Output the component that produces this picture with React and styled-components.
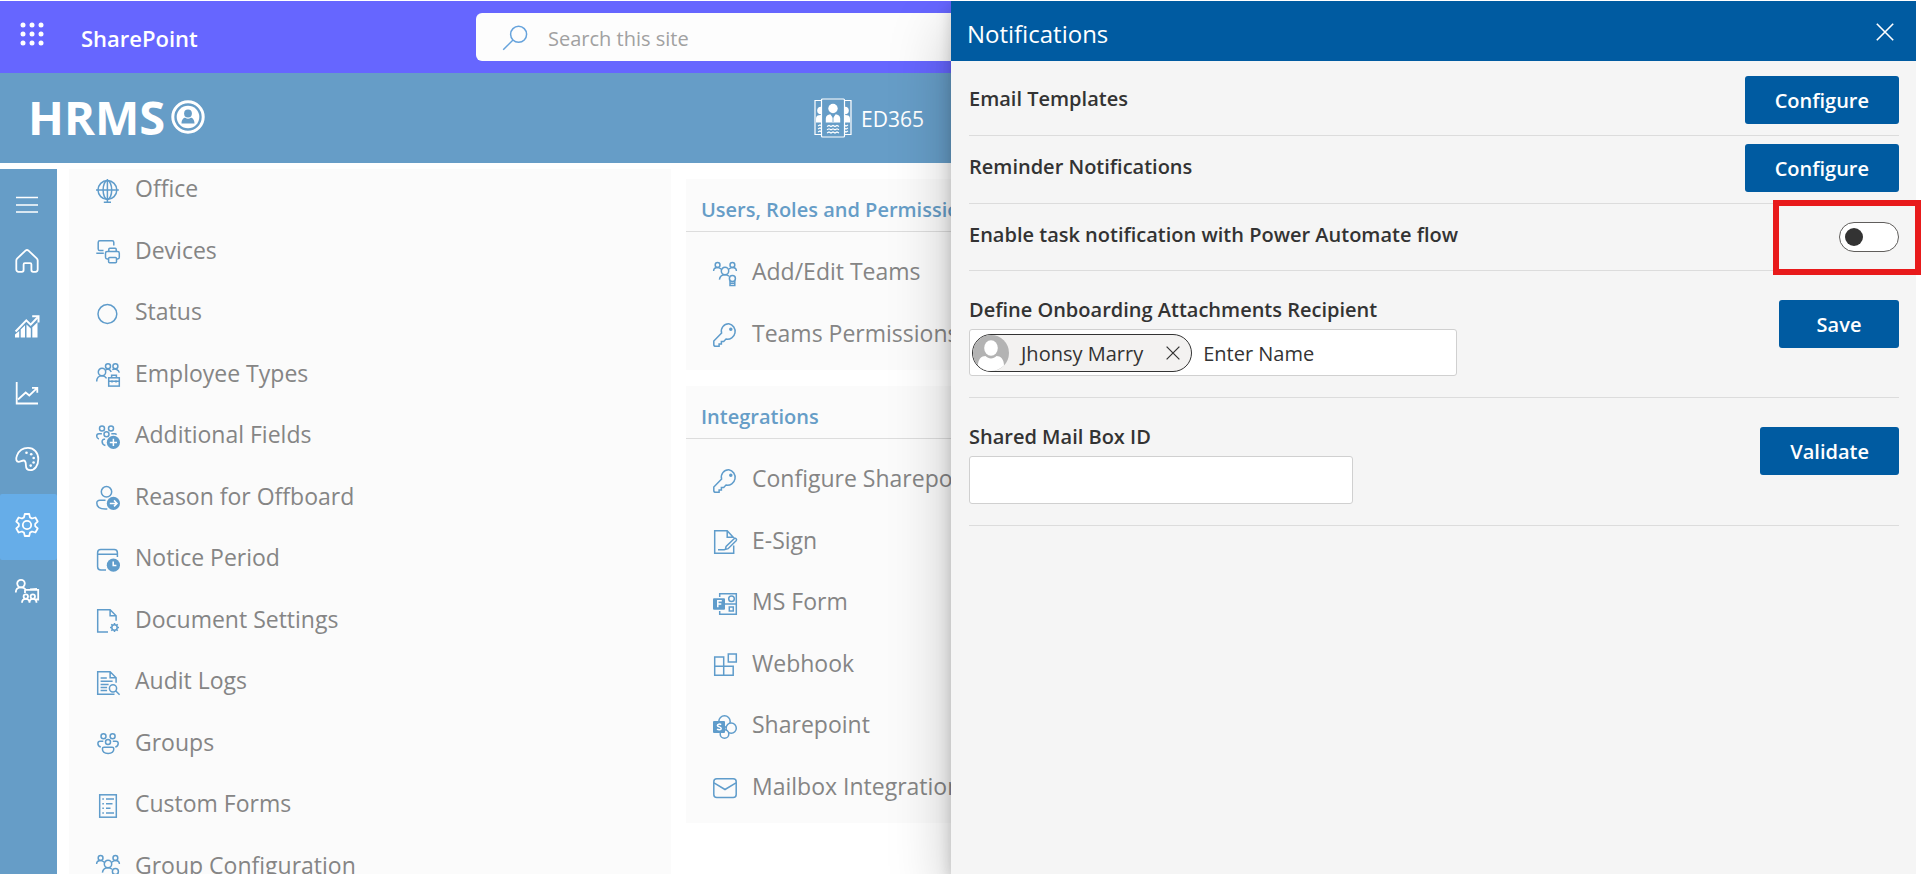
import React from "react";
import styled, { createGlobalStyle } from "styled-components";

const GlobalStyle = createGlobalStyle`
  * { box-sizing: border-box; }
  body {
    margin: 0;
    background: #ffffff;
    color: #333333;
    font-family: "Open Sans", "Noto Sans", sans-serif;
    overflow: hidden;
  }
  button, input { font-family: inherit; }
  ul { list-style: none; margin: 0; padding: 0; }
`;

const Shell = styled.div`
  position: relative;
  display: flex;
  flex-direction: column;
  height: 100vh;
  margin-right: 6px;
  padding-top: 1px;
`;

/* Suite bar */

const SuiteBar = styled.div`
  display: grid;
  grid-template-columns: minmax(220px, 1fr) minmax(0, 964px) minmax(0, 1fr);
  align-items: center;
  flex: none;
  height: 72px;
  background: #6666ff;
`;

const SuiteStart = styled.div`
  display: flex;
  align-items: center;
  gap: 37px;
  padding-left: 20px;
`;

const PlainButton = styled.button`
  display: flex;
  align-items: center;
  justify-content: center;
  padding: 0;
  border: 0;
  background: none;
  color: inherit;
  cursor: pointer;
`;

const WaffleButton = styled(PlainButton)`
  height: 32px;
  padding-bottom: 6px;
  color: #ffffff;
`;

const SuiteName = styled.a`
  padding-top: 2px;
  color: #ffffff;
  font-size: 22px;
  font-weight: 600;
  line-height: 32px;
  text-decoration: none;
`;

const SearchBox = styled.label`
  display: flex;
  align-items: center;
  gap: 20px;
  height: 48px;
  padding: 2px 26px 0;
  border-radius: 6px;
  background: #fdfdfd;
  color: #66a3dc;
`;

const SearchInput = styled.input`
  flex: 1;
  min-width: 0;
  padding: 2px 0 0;
  border: 0;
  outline: 0;
  background: none;
  font-size: 20px;
  line-height: 28px;
  &::placeholder { color: #a1a1a1; opacity: 1; }
`;

/* Product header */

const ProductHeader = styled.header`
  display: grid;
  grid-template-columns: calc(50% - 144px) 1fr;
  align-items: center;
  flex: none;
  height: 90px;
  background: #669dc7;
  color: #ffffff;
`;

const Brand = styled.div`
  display: flex;
  align-items: center;
  gap: 6px;
  padding: 0 0 2px 28px;
  font-size: 47px;
  font-weight: 700;
  line-height: 56px;
`;

const ProductLink = styled.a`
  display: flex;
  align-items: center;
  gap: 9px;
  color: #ffffff;
  font-size: 21px;
  line-height: 40px;
  text-decoration: none;
`;

const ProductName = styled.span`
  padding-top: 2px;
`;

/* Body */

const Body = styled.div`
  display: flex;
  flex: 1;
  min-height: 0;
  gap: 12px;
  padding-top: 6px;
`;

const SideNav = styled.nav`
  flex: none;
  width: 57px;
  padding-top: 15px;
  background: #669dc7;
`;

const NavButton = styled(PlainButton)`
  width: 100%;
  height: ${(p) => (p.$short ? 46 : 66)}px;
  padding: 0 3px 5px 0;
  border-radius: 2px;
  background: ${(p) => (p.$active ? "#66ade8" : "none")};
  color: #ffffff;
`;

const Columns = styled.main`
  display: grid;
  grid-template-columns: repeat(3, minmax(0, 1fr));
  gap: 15px;
  flex: 1;
  min-width: 0;
  padding-right: 11px;
`;

const ScrollColumn = styled.section`
  overflow: hidden;
  background: #fbfbfb;
`;

const ScrolledList = styled.ul`
  margin-top: -11px;
`;

const CardColumn = styled.div`
  display: flex;
  flex-direction: column;
  gap: 16px;
  padding-top: 10px;
`;

const Card = styled.section`
  background: #fbfbfb;
  padding-bottom: 6px;
`;

const CardTitle = styled.h2`
  margin: 0 0 9px;
  padding: 13px 15px 3px;
  border-bottom: 1px solid #dddddd;
  color: #669dc7;
  font-size: 20px;
  font-weight: 600;
  line-height: 36px;
  white-space: nowrap;
`;

const MenuLink = styled.a`
  display: flex;
  align-items: center;
  gap: 15px;
  padding: 13px 0 14px 27px;
  color: #858585;
  font-size: 23px;
  line-height: 1.5;
  text-decoration: none;
  white-space: nowrap;
`;

const Svg = styled.svg`
  display: block;
  flex: none;
  width: ${(p) => p.$w || 24}px;
  height: ${(p) => p.$h || p.$w || 24}px;
`;

const MenuGlyph = styled(Svg)`
  margin-top: 5px;
  color: #5f9ccb;
`;

/* Drawer */

const Drawer = styled.aside`
  position: absolute;
  z-index: 2;
  top: 1px;
  right: 0;
  bottom: 0;
  left: calc(50% - 7px);
  background: #f5f5f5;
  &::before {
    content: "";
    position: absolute;
    z-index: -1;
    inset: 0;
    box-shadow: 0 26px 58px rgba(0, 0, 0, 0.22), 0 5px 14px rgba(0, 0, 0, 0.18);
    clip-path: inset(0 100% 0 -160px);
  }
`;

const DrawerHeader = styled.header`
  display: flex;
  align-items: center;
  justify-content: space-between;
  height: 60px;
  padding: 2px 22px 0 16px;
  background: #005ba1;
  color: #ffffff;
`;

const DrawerTitle = styled.h1`
  margin: 0;
  padding-top: 4px;
  font-size: 24px;
  font-weight: 400;
  line-height: 32px;
`;

const DrawerBody = styled.div`
  padding: 7px 17px 0 18px;
`;

const SettingRow = styled.div`
  position: relative;
  display: flex;
  align-items: center;
  justify-content: space-between;
  min-height: 67px;
  padding: 8px 0 11px;
  border-bottom: 1px solid #dcdcdc;
`;

const FieldRow = styled(SettingRow)`
  align-items: flex-start;
  padding: 29px 0 21px;
`;

const SettingName = styled.label`
  display: block;
  padding-bottom: 2px;
  font-size: 20px;
  font-weight: 600;
  line-height: 20px;
`;

const Field = styled.div`
  display: flex;
  flex-direction: column;
  gap: 7px;
  width: ${(p) => p.$width}px;
`;

const Primary = styled.button`
  height: 48px;
  min-width: 120px;
  padding: 2px 30px 0;
  border: 0;
  border-radius: 3px;
  background: #005ba1;
  color: #ffffff;
  font-size: 20px;
  font-weight: 600;
  line-height: 28px;
  cursor: pointer;
`;

const Toggle = styled.input`
  appearance: none;
  display: flex;
  align-items: center;
  width: 60px;
  height: 30px;
  margin: 2px 0 0;
  padding: 0 5px;
  border: 1px solid #605e5c;
  border-radius: 15px;
  background: #ffffff;
  cursor: pointer;
  &::before {
    content: "";
    width: 18px;
    height: 18px;
    border-radius: 50%;
    background: #333333;
  }
  &:checked { justify-content: flex-end; }
`;

const Highlight = styled.div`
  position: absolute;
  top: -4px;
  right: -22px;
  width: 148px;
  height: 75px;
  border: 6px solid #e81a1b;
  pointer-events: none;
`;

const Picker = styled.div`
  display: flex;
  align-items: center;
  gap: 11px;
  height: 47px;
  padding: 0 2px;
  border: 1px solid #d0d0d0;
  border-radius: 3px;
  background: #ffffff;
`;

const Chip = styled.span`
  display: flex;
  align-items: center;
  height: 38px;
  padding-right: 11px;
  border: 1px solid #333333;
  border-radius: 19px;
  background: #f3f2f1;
  font-size: 20px;
  line-height: 28px;
  white-space: nowrap;
`;

const ChipName = styled.span`
  margin: 0 23px 0 12px;
  padding-top: 2px;
`;

const PickerInput = styled.input`
  flex: 1;
  min-width: 0;
  padding: 2px 0 0;
  border: 0;
  outline: 0;
  background: none;
  font-size: 20px;
  line-height: 28px;
  &::placeholder { color: #333333; opacity: 1; }
`;

const TextInput = styled.input`
  width: 100%;
  height: 48px;
  padding: 0 10px;
  border: 1px solid #d0d0d0;
  border-radius: 3px;
  background: #ffffff;
  font-size: 20px;
`;

/* Drawings shared by the navigation and the menus, on a 24 unit grid */

const teamHeads = (
  <>
    <circle cx="4.6" cy="3" r="2.4" />
    <circle cx="19.4" cy="3" r="2.4" />
    <circle cx="12" cy="9" r="3.7" />
    <path d="M.6 9c0-2 1.6-3.6 4-3.6 1.8 0 2.6 1 3.6 1.8M23.4 9c0-2-1.6-3.6-4-3.6-1.8 0-2.6 1-3.6 1.8M6.4 17.6c.4-3 2.4-4.9 5.6-4.9 1.8 0 3 .6 4 1.6" />
    <circle cx="19.4" cy="16.4" r="3" />
    <path d="M17 18.5v5h4.800v-5M17 21.300h4.800" />
  </>
);

const keyShape = (
  <>
    <path d="M15.8.8a7.3 7.3 0 0 0-7.2 9.3L.8 18v3.4c0 1 .8 1.9 1.900 1.9h3.400v-2.400h2.300v-2.500h2.300l2.300-2.400a7.300 7.300 0 1 0 2.800-15.200z" />
    <circle cx="17.8" cy="6.2" r="1" fill="currentColor" />
  </>
);

const glyphs = {
  globe: (
    <>
      <circle cx="11.4" cy="11" r="9.4" />
      <ellipse cx="11.4" cy="11" rx="4.3" ry="9.4" />
      <path d="M0 11h22.8M11.4 0v23M7.8 23.2h7.2" />
    </>
  ),
  devices: (
    <>
      <path d="M7.5 10.6H3.8A1.6 1.6 0 0 1 2.2 9V2.4C2.2 1.5 2.9.8 3.8.8h12.4c.9 0 1.600.7 1.600 1.600V5.500M.3 13.300h7.500" />
      <path d="M12.800 11.500V9.200c0-.6.4-1 1-1h5.400c.6 0 1 .4 1 1v2.300M12.500 19h-1.300c-1 0-1.700-.7-1.700-1.700v-4c0-1 .7-1.700 1.700-1.700h10.400c1 0 1.700.7 1.700 1.700v4c0 1-.7 1.700-1.700 1.700h-1.100" />
      <rect x="12.600" y="17.400" width="7.900" height="5.400" rx="1" />
    </>
  ),
  circle: <circle cx="11.400" cy="12" r="9.400" />,
  employees: (
    <>
      <circle cx="12" cy="3.300" r="2.500" />
      <circle cx="19.400" cy="3.300" r="2.500" />
      <circle cx="6" cy="9" r="3.700" />
      <path d="M.7 18.500c0-3.300 2-5.800 5.300-5.800 2.400 0 3.600 1.100 4.600 2.600M9.600 6.800c1.500-1 4.300-1 5.600 2.200M16.300 6.700c3-1.500 6.300-.2 7 3" />
      <rect x="12.700" y="14.800" width="10.600" height="8.300" />
      <path d="M15.600 14.600v-2.300h4.800v2.300M12.700 18.300h10.600M16 17.300v2.300M20 17.300v2.300" />
    </>
  ),
  addPeople: (
    <>
      <circle cx="6" cy="3.500" r="2.500" />
      <circle cx="15" cy="3.500" r="2.500" />
      <circle cx="10.500" cy="9.200" r="2.500" />
      <path d="M2.900 14C1.500 13.500.7 12.300.7 11c0-1.300.9-2.300 2.200-2.300h3M15.300 8.700h3.300c1 0 1.600.4 2 1M9.400 20.500c-2-.6-3.300-1.800-3.300-4 0-1.300.8-2.200 2-2.200h1" />
      <circle cx="17.400" cy="17.400" r="6.600" fill="currentColor" stroke="none" />
      <path d="M17.400 13.800v7.200M13.800 17.400h7.200" stroke="#fff" />
    </>
  ),
  offboard: (
    <>
      <circle cx="10.500" cy="5.800" r="5.200" />
      <path d="M9.500 14.300H3.800c-1.700 0-3 1-3 2.700 0 3.700 3.400 6 8.500 6.100h2" />
      <circle cx="17.400" cy="17.400" r="6.600" fill="currentColor" stroke="none" />
      <path d="M13.800 17.400h7M18 14.400l3 3-3 3" stroke="#fff" />
    </>
  ),
  notice: (
    <>
      <path d="M10 22H4.800A3.200 3.200 0 0 1 1.600 18.800V4.700c0-1.800 1.400-3.200 3.200-3.200h13.400c1.800 0 3.200 1.400 3.200 3.200V9M1.600 6.200h19.800" />
      <circle cx="17.400" cy="17.200" r="6.600" fill="currentColor" stroke="none" />
      <path d="M17.200 13.600v4h3.200" stroke="#fff" />
    </>
  ),
  docGear: (
    <>
      <path d="M12 23H1.700V.8h12.400l6 6v5M14.100.8v6h6" />
      <circle cx="18.500" cy="18.500" r="2.700" />
      <path d="M18.500 14v1.500M18.500 21.500V23M14 18.500h1.500M21.500 18.500H23M15.300 15.300l1 1M20.700 20.700l1 1M15.300 21.700l1-1M20.700 16.300l1-1" />
    </>
  ),
  audit: (
    <>
      <path d="M18.500 23.200H1.700V.8h12.400l6 6v5M14.100.8v6h6M4.600 7h6.200M4.600 10.200h12M4.600 13.400h8M4.600 16.400h6.500M4.600 19.500h6.500" />
      <circle cx="17" cy="17.300" r="3.600" />
      <path d="M19.600 19.800l4 4" />
    </>
  ),
  groups: (
    <>
      <circle cx="7.500" cy="4.300" r="2.500" />
      <circle cx="16.600" cy="4.300" r="2.500" />
      <circle cx="12" cy="10" r="2.500" />
      <path d="M4.800 15C3 14.600 1.900 13.300 1.900 11.500c0-1.300.9-2.200 2.200-2.200h3.200M19.300 15c1.800-.4 2.900-1.700 2.900-3.500 0-1.300-.9-2.200-2.200-2.200h-3.200M8 15.200h8.200c1 0 1.600.7 1.600 1.600 0 2.900-2.300 4.700-5.700 4.700s-5.700-1.800-5.700-4.700c0-.9.6-1.600 1.600-1.600z" />
    </>
  ),
  form: (
    <>
      <rect x="3.700" y=".8" width="16.600" height="22.400" />
      <path d="M6.300 5h1.600M10 5h8M6.300 9.700h1.600M10 9.700h6.500M6.300 14.300h1.600M10 14.300h4.500M6.300 19h1.600M10 19h8" />
    </>
  ),
  team: teamHeads,
  key: keyShape,
  sign: (
    <>
      <path d="M20.700 15.500V23.200H1.700V.8h12.500l6 6.400h-6V.8" />
      <path d="M12.300 19.500l.8-3 8-7.800c1.500-1.200 3.300.7 2 2.100l-8 7.900zM5 19.700h7.300" />
    </>
  ),
  msForm: (
    <>
      <path d="M6.700 5V1.700h16.600v20.600H6.700V19M12 12h11.300" />
      <circle cx="18.500" cy="6.800" r="2.800" />
      <rect x="16.300" y="15" width="4" height="4" />
      <rect x="0" y="6.300" width="12" height="11.500" rx="1" fill="currentColor" stroke="none" />
      <path d="M4.800 15.300V8.800h4M4.800 12.100h3.500" stroke="#fff" strokeWidth="1.500" />
    </>
  ),
  webhook: (
    <path d="M1.700 4h9v18.200h-9zM1.700 13.200h18.500v9H1.700zM15.300 1h8v8h-8z" />
  ),
  sharepoint: (
    <>
      <circle cx="11.500" cy="6.500" r="5.700" />
      <circle cx="18.200" cy="13.200" r="5.100" fill="#fbfbfb" />
      <circle cx="11.500" cy="19" r="4.300" fill="#fbfbfb" />
      <rect x="0" y="6" width="12" height="12" rx="1" fill="currentColor" stroke="none" />
      <path d="M8.200 9.600c-1.200-.8-3.800-.7-3.800.8 0 1.700 3.800 1.200 3.800 3 0 1.600-2.700 1.700-4.200.8" stroke="#fff" />
    </>
  ),
  mail: (
    <>
      <rect x=".8" y="2.800" width="22.400" height="18.800" rx="3" />
      <path d="M1 6.800l11 6.700 11-6.700" />
    </>
  ),
};

function MenuItem({ glyph, children }) {
  return (
    <li>
      <MenuLink href="#">
        <MenuGlyph viewBox="0 0 24 24" fill="none" stroke="currentColor" strokeWidth="1.500" overflow="visible" aria-hidden="true">
          {glyphs[glyph]}
        </MenuGlyph>
        {children}
      </MenuLink>
    </li>
  );
}

const navItems = [
  {
    label: "Menu",
    short: true,
    art: <path d="M1 4.500h22M1 12h22M1 19h22" strokeWidth="1.500" />,
  },
  {
    label: "Home",
    art: (
      <path d="M1.300 11.600c0-.9.4-1.700 1-2.300l8.200-7.600c.9-.8 2.100-.8 3 0l8.200 7.600c.6.6 1 1.400 1 2.300v9c0 1.200-1 2.200-2.200 2.200h-2.400c-1 0-1.700-.8-1.700-1.700v-5.700c0-.7-.5-1.200-1.200-1.200H9.800c-.7 0-1.200.5-1.200 1.200v5.700c0 .9-.7 1.700-1.700 1.700H3.500c-1.200 0-2.200-1-2.200-2.200z" />
    ),
  },
  {
    label: "Analytics",
    art: (
      <>
        <path d="M.6 16.500L11.300 5.300l4.400 4.300 7-7.400" strokeWidth="2" />
        <path d="M17.200 1.200h6.300v6.300" strokeWidth="2" />
        <path
          d="M0 22.500v-3l4.200-3.600v6.600zM5.700 22.500v-8l4.300-4.300v12.300zM11.500 22.500V9.500l4.300 4v9zM17.300 22.500V12.300l5.200-5v15.200z"
          fill="currentColor"
          stroke="none"
        />
      </>
    ),
  },
  {
    label: "Trends",
    art: (
      <>
        <path d="M1.700 1v21.500H23" />
        <path d="M3 18.500l7.700-7 3.600 3L22 7.200M17 6.800h5.300v5" strokeWidth="1.800" />
      </>
    ),
  },
  {
    label: "Themes",
    art: (
      <>
        <path d="M2 8.500C4 3.500 8.300.9 13 .9c6 0 10.300 4.700 10.300 11 0 6.800-3.600 11.300-8 11.300-3 0-4.400-2-4.400-5 0-3-.5-4.700-2.400-4.700-1.700 0-3 1.300-4.900 1.300C1.500 14.800.3 12.500 2 8.500z" />
        <g fill="currentColor" stroke="none">
          <circle cx="11.500" cy="5.800" r="1.300" />
          <circle cx="16.200" cy="7.300" r="1.300" />
          <circle cx="18.700" cy="11" r="1.300" />
          <circle cx="18.600" cy="15.500" r="1.300" />
          <circle cx="15.700" cy="18.600" r="1.300" />
        </g>
      </>
    ),
  },
  {
    label: "Settings",
    active: true,
    art: (
      <>
        <circle cx="12" cy="12" r="4.200" />
        <path d="M9.800 1h4.400l.8 3.400 2 1.100 3.400-1 2.300 4-2.500 2.300v2.400l2.500 2.300-2.300 4-3.400-1-2 1.100-.8 3.400H9.800L9 19.600l-2-1.100-3.400 1-2.300-4 2.500-2.300v-2.400L1.300 8.500l2.300-4 3.400 1 2-1.100z" strokeLinejoin="round" />
      </>
    ),
  },
  {
    label: "Training",
    art: (
      <>
        <circle cx="6" cy="4.600" r="3.800" />
        <path d="M.8 13.500c0-3 2-5.100 5.200-5.100 2.500 0 3.900 1 4.900 2.500h12.300v9.600h-3M15 10.500l7-.5" />
        <circle cx="10.800" cy="17.600" r="2.200" />
        <circle cx="17.800" cy="17.600" r="2.200" />
        <path d="M7 23.800c0-2.300 1.500-4 3.800-4s3.700 1.700 3.700 4c0-2.300 1.300-4 3.300-4 2.300 0 3.700 1.700 3.700 4M10 11v3" />
      </>
    ),
  },
];

const leftMenu = [
  ["globe", "Office"],
  ["devices", "Devices"],
  ["circle", "Status"],
  ["employees", "Employee Types"],
  ["addPeople", "Additional Fields"],
  ["offboard", "Reason for Offboard"],
  ["notice", "Notice Period"],
  ["docGear", "Document Settings"],
  ["audit", "Audit Logs"],
  ["groups", "Groups"],
  ["form", "Custom Forms"],
  ["team", "Group Configuration"],
];

const cards = [
  {
    title: "Users, Roles and Permissions",
    items: [
      ["team", "Add/Edit Teams"],
      ["key", "Teams Permissions"],
    ],
  },
  {
    title: "Integrations",
    items: [
      ["key", "Configure Sharepoint"],
      ["sign", "E-Sign"],
      ["msForm", "MS Form"],
      ["webhook", "Webhook"],
      ["sharepoint", "Sharepoint"],
      ["mail", "Mailbox Integration"],
    ],
  },
];

function Cross({ size }) {
  return (
    <Svg $w={size} viewBox="0 0 18 18" fill="none" stroke="currentColor" strokeWidth="1.600" aria-hidden="true">
      <path d="M.8.8l16.400 16.400M17.200.8L.8 17.200" />
    </Svg>
  );
}

function SideBadge() {
  return (
    <>
      <circle cx="0" cy="12.500" r="3.800" fill="currentColor" stroke="none" />
      <path d="M-5 24.500v-4c0-2.500 1.500-3.500 5-3.500s5 1 5 3.500v4z" fill="currentColor" stroke="none" />
      <path d="M-3 28l2-1 2 1 2-1M-3 31l2-1 2 1 2-1M-3 34l2-1 2 1 2-1" />
    </>
  );
}

export default function App() {
  return (
    <>
      <GlobalStyle />
      <Shell>
        <SuiteBar>
          <SuiteStart>
            <WaffleButton type="button" aria-label="App launcher">
              <Svg viewBox="0 0 24 24" fill="currentColor" aria-hidden="true">
                {[3, 12, 21].map((y) =>
                  [3, 12, 21].map((x) => <circle key={`${x}-${y}`} cx={x} cy={y} r="2.500" />)
                )}
              </Svg>
            </WaffleButton>
            <SuiteName href="#">SharePoint</SuiteName>
          </SuiteStart>
          <SearchBox>
            <Svg $w={26} viewBox="0 0 26 26" fill="none" stroke="currentColor" strokeWidth="1.500" aria-hidden="true">
              <circle cx="16.600" cy="9.300" r="8" />
              <path d="M11 15L1.200 24.800" />
            </Svg>
            <SearchInput type="text" placeholder="Search this site" aria-label="Search this site" />
          </SearchBox>
        </SuiteBar>

        <ProductHeader>
          <Brand>
            HRMS
            <Svg $w={34} viewBox="0 0 34 34" fill="none" aria-hidden="true">
              <circle cx="17" cy="17" r="15.200" stroke="currentColor" strokeWidth="3" />
              <circle cx="17" cy="17" r="11.300" fill="currentColor" />
              <circle cx="17" cy="13.500" r="3.900" fill="#669dc7" />
              <path d="M10.500 23.500c0-4 2-5.800 3.800-5.800 1.500 1.300 3.900 1.300 5.400 0 1.800 0 3.800 1.800 3.800 5.800z" fill="#669dc7" />
            </Svg>
          </Brand>
          <ProductLink href="#">
            <Svg $w={38} $h={40} viewBox="0 0 38 40" fill="none" stroke="currentColor" strokeWidth="1.200" aria-hidden="true">
              <path d="M7 2.500H1v34h6M31 2.500h6v34h-6" />
              <svg x="2" y="3" width="5" height="33" viewBox="0 3 5 33">
                <g transform="translate(5 0)">
                  <SideBadge />
                </g>
              </svg>
              <svg x="31" y="3" width="5" height="33" viewBox="31 3 5 33">
                <g transform="translate(31 0)">
                  <SideBadge />
                </g>
              </svg>
              <rect x="7.500" y="1" width="23" height="38" rx="1" />
              <circle cx="19" cy="10.500" r="4.700" fill="currentColor" stroke="none" />
              <path d="M11.800 24.500v-4c0-2.500 2-3.800 4.500-4.200L19 20l2.700-3.700c2.500.4 4.500 1.700 4.500 4.200v4z" fill="currentColor" stroke="none" />
              <path d="M19 18v6" stroke="#669dc7" strokeWidth=".8" />
              <path d="M13 28.500l2-1 2 1 2-1 2 1 2-1 2 1M13 31.800l2-1 2 1 2-1 2 1 2-1 2 1M13 35l2-1 2 1 2-1 2 1 2-1 2 1" />
            </Svg>
            <ProductName>ED365</ProductName>
          </ProductLink>
        </ProductHeader>

        <Body>
          <SideNav aria-label="Main">
            {navItems.map((item) => (
              <NavButton key={item.label} type="button" aria-label={item.label} $short={item.short} $active={item.active}>
                <Svg viewBox="0 0 24 24" fill="none" stroke="currentColor" strokeWidth="1.800" overflow="visible" aria-hidden="true">
                  {item.art}
                </Svg>
              </NavButton>
            ))}
          </SideNav>
          <Columns>
            <ScrollColumn>
              <ScrolledList>
                {leftMenu.map(([glyph, text]) => (
                  <MenuItem key={text} glyph={glyph}>{text}</MenuItem>
                ))}
              </ScrolledList>
            </ScrollColumn>
            <CardColumn>
              {cards.map((card) => (
                <Card key={card.title}>
                  <CardTitle>{card.title}</CardTitle>
                  <ul>
                    {card.items.map(([glyph, text]) => (
                      <MenuItem key={text} glyph={glyph}>{text}</MenuItem>
                    ))}
                  </ul>
                </Card>
              ))}
            </CardColumn>
          </Columns>
        </Body>

        <Drawer aria-labelledby="drawer-title">
          <DrawerHeader>
            <DrawerTitle id="drawer-title">Notifications</DrawerTitle>
            <PlainButton type="button" aria-label="Close">
              <Cross size={18} />
            </PlainButton>
          </DrawerHeader>
          <DrawerBody>
            <SettingRow>
              <SettingName as="span">Email Templates</SettingName>
              <Primary type="button">Configure</Primary>
            </SettingRow>
            <SettingRow>
              <SettingName as="span">Reminder Notifications</SettingName>
              <Primary type="button">Configure</Primary>
            </SettingRow>
            <SettingRow>
              <SettingName htmlFor="task-flow">Enable task notification with Power Automate flow</SettingName>
              <Toggle type="checkbox" id="task-flow" />
              <Highlight />
            </SettingRow>
            <FieldRow>
              <Field $width={488}>
                <SettingName htmlFor="recipient">Define Onboarding Attachments Recipient</SettingName>
                <Picker>
                  <Chip>
                    <Svg $w={36} viewBox="0 0 36 36" aria-hidden="true">
                      <circle cx="18" cy="18" r="18" fill="#b3b3b3" />
                      <ellipse cx="18" cy="13" rx="6.800" ry="7.800" fill="#fff" />
                      <path d="M5 30.500C5 24 8.500 21 12.500 21c3 3.300 8 3.300 11 0 4 0 7.500 3 7.500 9.500C27.500 34 23 36 18 36S8.500 34 5 30.500z" fill="#fff" />
                    </Svg>
                    <ChipName>Jhonsy Marry</ChipName>
                    <PlainButton type="button" aria-label="Remove Jhonsy Marry">
                      <Cross size={14} />
                    </PlainButton>
                  </Chip>
                  <PickerInput id="recipient" type="text" placeholder="Enter Name" />
                </Picker>
              </Field>
              <Primary type="button">Save</Primary>
            </FieldRow>
            <FieldRow>
              <Field $width={384}>
                <SettingName htmlFor="mailbox">Shared Mail Box ID</SettingName>
                <TextInput id="mailbox" type="text" />
              </Field>
              <Primary type="button">Validate</Primary>
            </FieldRow>
          </DrawerBody>
        </Drawer>
      </Shell>
    </>
  );
}
